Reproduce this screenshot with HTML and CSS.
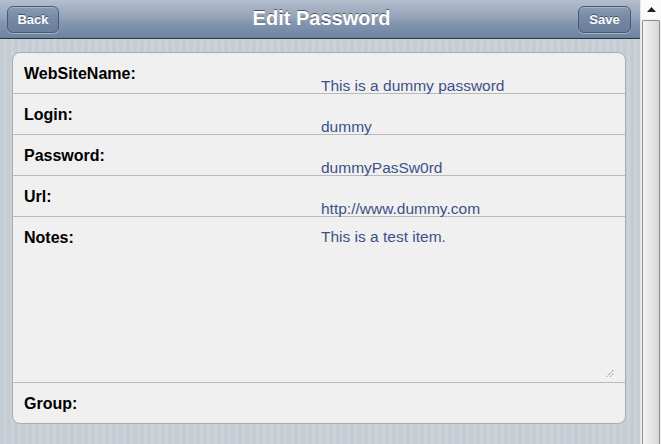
FILE: index.html
```html
<!DOCTYPE html>
<html>
<head>
<meta charset="utf-8">
<link rel="stylesheet" href="styles.css">
</head>
<body>
<div class="app">
  <div class="page">
    <div class="toolbar">
      <a class="button back">Back</a>
      <h1 class="title">Edit Password</h1>
      <a class="button save">Save</a>
    </div>
    <div class="content">
      <div class="panel">
        <div class="row">
          <span class="label">WebSiteName:</span>
          <span class="value">This is a dummy password</span>
        </div>
        <div class="row">
          <span class="label">Login:</span>
          <span class="value">dummy</span>
        </div>
        <div class="row">
          <span class="label">Password:</span>
          <span class="value">dummyPasSw0rd</span>
        </div>
        <div class="row">
          <span class="label">Url:</span>
          <span class="value">http://www.dummy.com</span>
        </div>
        <div class="row notes">
          <span class="label">Notes:</span>
          <div class="textarea">
            <span class="notes-text">This is a test item.</span>
            <svg class="grip" width="8" height="8" viewBox="0 0 8 8"><path d="M1 7.5 L7.5 1 M4.5 7.5 L7.5 4.5" stroke="#555" stroke-width="1" stroke-dasharray="1 1"/></svg>
          </div>
        </div>
        <div class="row last">
          <span class="label">Group:</span>
        </div>
      </div>
    </div>
  </div>
  <div class="scrollbar">
    <div class="arrow"><svg width="9" height="5" viewBox="0 0 9 5"><path d="M0 5 L4.5 0 L9 5 Z" fill="#222"/></svg></div>
    <div class="track"><div class="thumb"></div></div>
  </div>
</div>
</body>
</html>
```
FILE: styles.css
```css
html, body {
  margin: 0;
  padding: 0;
  height: 100%;
  overflow: hidden;
}
body {
  font-family: "Liberation Sans", Arial, sans-serif;
}
.app {
  display: flex;
  width: 661px;
  height: 444px;
}
.page {
  width: 640px;
  display: flex;
  flex-direction: column;
  background: repeating-linear-gradient(90deg, #c5ccd4 0px, #c5ccd4 4px, #cbd2d8 4px, #cbd2d8 7px);
}
.toolbar {
  height: 38px;
  border-bottom: 1px solid #2d3642;
  background: linear-gradient(#b3bece 0%, #95a4b9 45%, #8799b1 55%, #6c83a1 100%);
  display: flex;
  align-items: center;
  justify-content: space-between;
  padding: 0 9px 0 7px;
  box-sizing: content-box;
}
.title {
  margin: 0 0 2px 6px;
  font-size: 20px;
  font-weight: bold;
  color: #fff;
  text-shadow: 0 -1px 0 rgba(0,0,0,0.5);
  line-height: 24px;
}
.button {
  display: flex;
  align-items: center;
  justify-content: center;
  box-sizing: border-box;
  height: 27px;
  margin-top: 1px;
  border: 1px solid #4a5a70;
  border-radius: 6px;
  background: linear-gradient(#8a9bb2 0%, #7488a4 50%, #6a7f9c 100%);
  box-shadow: inset 0 1px 0 rgba(255,255,255,0.25), 0 1px 0 rgba(255,255,255,0.35);
  color: #fff;
  font-size: 13px;
  font-weight: bold;
  text-shadow: 0 -1px 0 rgba(0,0,0,0.45);
}
.back { width: 52px; }
.save { width: 53px; }
.content {
  flex: 1;
  padding: 13px 0 0 12px;
}
.panel {
  width: 614px;
  box-sizing: border-box;
  border: 1px solid #a9abae;
  border-radius: 8px;
  background: #f0f0f0;
}
.row {
  display: grid;
  grid-template-columns: 297px 1fr;
  padding-left: 11px;
  height: 40px;
  border-bottom: 1px solid #b9babd;
}
.row.last {
  border-bottom: none;
}
.label {
  font-size: 16px;
  font-weight: bold;
  color: #000;
  line-height: 18px;
  padding-top: 12px;
}
.value {
  font-size: 15.5px;
  color: #3c5288;
  line-height: 18px;
  padding-top: 24px;
  white-space: nowrap;
}
.row.notes {
  height: 165px;
}
.textarea {
  position: relative;
  margin-right: 11px;
  margin-bottom: 5px;
}
.notes-text {
  display: block;
  font-size: 15.5px;
  color: #3c5288;
  line-height: 18px;
  padding-top: 11px;
}
.grip {
  position: absolute;
  right: 0;
  bottom: 0;
}
.scrollbar {
  width: 21px;
  display: flex;
  flex-direction: column;
  background: #fff;
  border-left: 1px solid #e6e6e6;
  box-sizing: border-box;
}
.arrow {
  height: 19px;
  display: flex;
  align-items: center;
  justify-content: center;
  background: #fbfbfb;
}
.track {
  flex: 1;
  padding: 1px 1px 0 1px;
  background: #f0f0f0;
}
.thumb {
  height: 100%;
  border: 1px solid #8f8f8f;
  border-bottom: none;
  border-radius: 2px 2px 0 0;
  background: linear-gradient(90deg, #f4f4f4 0%, #e8e8e8 40%, #d6d6d6 100%);
  box-sizing: border-box;
}
```
